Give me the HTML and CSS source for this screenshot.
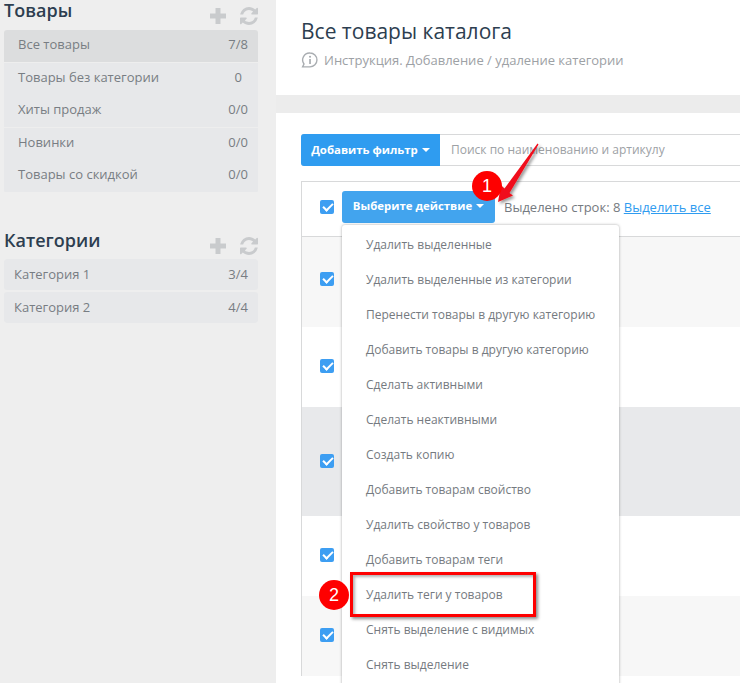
FILE: index.html
```html
<!DOCTYPE html>
<html lang="ru">
<head>
<meta charset="utf-8">
<title>Все товары каталога</title>
<link rel="stylesheet" href="styles.css">
</head>
<body>
<div class="page">
  <aside class="sidebar">
    <div class="side-head side-head-first">
      <h2 class="side-title">Товары</h2>
      <div class="side-tools">
        <svg class="tool tool-plus" viewBox="0 0 16 16"><path d="M5.500 0h5v5.500H16v5h-5.500V16h-5v-5.500H0v-5h5.500z"/></svg>
        <svg class="tool" viewBox="0 0 1536 1536"><path d="M1511 928q0 5-1 7-64 268-268 434.500T764 1536q-146 0-282.500-55T238 1324l-129 129q-19 19-45 19t-45-19-19-45V960q0-26 19-45t45-19h448q26 0 45 19t19 45-19 45l-137 137q71 66 161 102t187 36q134 0 250-65t186-179q11-17 53-117 8-23 30-23h192q13 0 22.500 9.500t9.500 22.500zm25-800v448q0 26-19 45t-45 19h-448q-26 0-45-19t-19-45 19-45l138-138Q969 256 768 256q-134 0-250 65T332 500q-11 17-53 117-8 23-30 23H50q-13 0-22.500-9.500T18 608v-7q65-268 270-434.500T768 0q146 0 284 55.500T1297 212l130-129q19-19 45-19t45 19 19 45z"/></svg>
      </div>
    </div>
    <ul class="side-list">
      <li class="side-item side-item-active"><span>Все товары</span><span>7/8</span></li>
      <li class="side-item"><span>Товары без категории</span><span class="count-single">0</span></li>
      <li class="side-item"><span>Хиты продаж</span><span>0/0</span></li>
      <li class="side-item"><span>Новинки</span><span>0/0</span></li>
      <li class="side-item"><span>Товары со скидкой</span><span>0/0</span></li>
    </ul>
    <div class="side-head side-head-second">
      <h2 class="side-title">Категории</h2>
      <div class="side-tools">
        <svg class="tool tool-plus" viewBox="0 0 16 16"><path d="M5.500 0h5v5.500H16v5h-5.500V16h-5v-5.500H0v-5h5.500z"/></svg>
        <svg class="tool" viewBox="0 0 1536 1536"><path d="M1511 928q0 5-1 7-64 268-268 434.500T764 1536q-146 0-282.500-55T238 1324l-129 129q-19 19-45 19t-45-19-19-45V960q0-26 19-45t45-19h448q26 0 45 19t19 45-19 45l-137 137q71 66 161 102t187 36q134 0 250-65t186-179q11-17 53-117 8-23 30-23h192q13 0 22.500 9.500t9.500 22.500zm25-800v448q0 26-19 45t-45 19h-448q-26 0-45-19t-19-45 19-45l138-138Q969 256 768 256q-134 0-250 65T332 500q-11 17-53 117-8 23-30 23H50q-13 0-22.500-9.500T18 608v-7q65-268 270-434.500T768 0q146 0 284 55.500T1297 212l130-129q19-19 45-19t45 19 19 45z"/></svg>
      </div>
    </div>
    <ul class="side-list side-list-cat">
      <li class="side-item side-item-cat"><span>Категория 1</span><span>3/4</span></li>
      <li class="side-item side-item-cat"><span>Категория 2</span><span>4/4</span></li>
    </ul>
  </aside>

  <main class="main">
    <header class="main-head">
      <h1 class="main-title">Все товары каталога</h1>
      <div class="hint">
        <svg class="hint-icon" viewBox="0 0 16 16"><path class="hint-bubble" d="M8.500 1a6.500 6.500 0 0 1 0 13H1.500l1.300-2.700A6.500 6.500 0 0 1 8.500 1z"/><circle class="hint-dot" cx="8.500" cy="4.500" r="1"/><path class="hint-bar" d="M7.700 6.500h1.600v4.800H7.700z"/></svg>
        <span>Инструкция. Добавление / удаление категории</span>
      </div>
    </header>
    <div class="band"></div>
    <section class="content">
      <div class="filter-row">
        <button class="btn btn-filter">Добавить фильтр<i class="caret"></i></button>
        <div class="search">Поиск по наименованию и артикулу</div>
      </div>
      <div class="table">
        <div class="tr tr-head">
          <span class="check"></span>
          <div class="action-wrap">
            <button class="btn btn-action">Выберите действие<i class="caret"></i></button>
            <ul class="menu">
              <li>Удалить выделенные</li>
              <li>Удалить выделенные из категории</li>
              <li>Перенести товары в другую категорию</li>
              <li>Добавить товары в другую категорию</li>
              <li>Сделать активными</li>
              <li>Сделать неактивными</li>
              <li>Создать копию</li>
              <li>Добавить товарам свойство</li>
              <li>Удалить свойство у товаров</li>
              <li>Добавить товарам теги</li>
              <li>Удалить теги у товаров</li>
              <li>Снять выделение с видимых</li>
              <li>Снять выделение</li>
            </ul>
          </div>
          <span class="selected">Выделено строк: 8 <a class="select-all">Выделить все</a></span>
        </div>
        <div class="tr tr-1"><span class="check"></span></div>
        <div class="tr tr-2"><span class="check"></span></div>
        <div class="tr tr-3"><span class="check"></span></div>
        <div class="tr tr-4"><span class="check"></span></div>
        <div class="tr tr-5"><span class="check"></span></div>
      </div>
    </section>
  </main>

  <svg class="arrow" viewBox="0 0 740 683">
    <defs>
      <filter id="sh" x="-30%" y="-30%" width="160%" height="160%"><feDropShadow dx="2" dy="2" stdDeviation="1.500" flood-color="#000" flood-opacity=".4"/></filter>
    </defs>
    <g filter="url(#sh)">
      <path class="arrow-head" d="M538.500 144.500L509.500 193L513 195.500L498 202L501 185L504.500 188.500L537.500 143.500z"/>
    </g>
  </svg>
  <div class="badge badge-1">1</div>
  <div class="badge badge-2">2</div>
  <div class="highlight"></div>
</div>
</body>
</html>
```
FILE: styles.css
```css
* { box-sizing: border-box; }
html, body { margin: 0; padding: 0; }
body { font-family: "Open Sans", sans-serif; color: #757a80; background: #fff; }
ul { list-style: none; margin: 0; padding: 0; }
.page { position: relative; display: flex; width: 740px; height: 683px; overflow: hidden; }

.sidebar { flex: 0 0 276px; background: #eeeeee; padding-left: 4px; padding-right: 18px; }
.side-head { display: flex; justify-content: space-between; }
.side-head-first { height: 30px; }
.side-head-second { height: 30px; margin-top: 36px; }
.side-title { margin: 0; font-size: 18px; font-weight: 600; line-height: 20px; color: #2d3e50; }
.side-head-second .side-title { margin-top: 1px; }
.side-tools { display: flex; align-items: center; gap: 14px; height: 16px; margin-top: 8px; }
.side-head-second .side-tools { margin-top: 9px; }
.tool { width: 18px; height: 18px; fill: #c9cbcd; display: block; }
.tool-plus { width: 16px; height: 16px; }

.side-list { border-radius: 3px; overflow: hidden; }
.side-item { display: flex; justify-content: space-between; align-items: center; height: 32px; margin-bottom: 0.500px; padding: 0 10px 4px 14px; background: #e7e8ea; font-size: 13px; color: #787d83; }
.side-item-active { background: #dcddde; }
.count-single { margin-right: 6px; }
.side-list-cat { display: flex; flex-direction: column; gap: 2px; }
.side-item-cat { height: 31px; margin-bottom: 0; padding: 0 10px; border-radius: 3px; }

.main { flex: 1 1 auto; min-width: 0; background: #fff; }
.main-head { height: 95px; padding: 17px 0 0 25px; }
.main-title { margin: 0; font-size: 21px; font-weight: 400; line-height: 28px; color: #2d3e50; }
.hint { display: flex; align-items: center; gap: 6px; margin-top: 6px; font-size: 13px; line-height: 18px; color: #9da1a5; }
.hint-icon { width: 17px; height: 17px; }
.hint-bubble { fill: none; stroke: #a9adb1; stroke-width: 1.300; }
.hint-dot, .hint-bar { fill: #a9adb1; }
.band { height: 18px; background: #ececec; }
.content { padding: 21px 0 0 25px; }

.filter-row { display: flex; height: 32px; width: 500px; border: 1px solid #d8d9da; border-left: 0; border-radius: 3px 0 0 3px; }
.btn { border: 0; color: #fff; font-family: inherit; font-size: 11.400px; font-weight: 700; padding: 0 0 2px 0; }
.btn-filter { flex: 0 0 139px; margin: -1px 0; background: #2f9cf0; border-radius: 3px 0 0 3px; }
.caret { display: inline-block; margin-left: 4px; vertical-align: 2px; border: 4px solid transparent; border-top-color: #fff; border-bottom: 0; }
.search { padding-left: 11px; font-size: 12px; line-height: 30px; color: #9da1a5; }

.table { width: 500px; margin-top: 15px; border-left: 1px solid #d8d9da; border-top: 1px solid #d8d9da; }
.tr { display: flex; align-items: center; padding-left: 18px; }
.tr-head { height: 55px; padding-bottom: 5px; border-bottom: 1px solid #d8d9da; }
.tr-1 { height: 90px; background: #f7f7f7; padding-bottom: 6px; }
.tr-2 { height: 80px; background: #fff; padding-bottom: 2px; }
.tr-3 { height: 109px; background: #e8e9eb; padding-bottom: 2px; }
.tr-4 { height: 80px; background: #fff; padding-bottom: 2px; }
.tr-5 { height: 80px; background: #f7f7f7; padding-bottom: 2px; }
.check { position: relative; flex: 0 0 14px; width: 14px; height: 14px; border-radius: 2px; background: #3d9ef2; }
.check::after { content: ""; position: absolute; left: 3px; top: 3px; width: 8px; height: 4px; border-left: 2px solid #fff; border-bottom: 2px solid #fff; transform: rotate(-45deg); }

.action-wrap { position: relative; margin-left: 8px; }
.btn-action { display: block; width: 153px; height: 32px; background: #42a4ee; border-radius: 3px; }
.selected { margin-left: 9px; font-size: 13px; color: #757a80; }
.select-all { color: #2f9cf0; text-decoration: underline; }

.menu { position: absolute; left: 0; top: 34px; width: 277px; height: 470px; padding-top: 2px; background: #fff; border-radius: 3px; box-shadow: 0 0 3px rgba(0, 0, 0, .35); z-index: 2; }
.menu li { height: 35px; padding-left: 24px; font-size: 12px; line-height: 35px; color: #757a80; white-space: nowrap; }

.arrow { position: absolute; left: 0; top: 0; width: 740px; height: 683px; z-index: 3; pointer-events: none; }
.arrow-head { fill: #f0101a; }
.badge { position: absolute; width: 30px; height: 30px; border-radius: 50%; background: #fe0000; color: #fff; font-family: "Liberation Sans", sans-serif; font-size: 18px; line-height: 30px; text-align: center; z-index: 4; }
.badge-1 { left: 472px; top: 171px; }
.badge-2 { left: 319px; top: 580px; }
.highlight { position: absolute; left: 350px; top: 572px; width: 186px; height: 45px; border: 3px solid #fe0000; box-shadow: 2px 2px 3px rgba(0, 0, 0, .45), inset 2px 2px 3px rgba(0, 0, 0, .3); z-index: 3; }
```
